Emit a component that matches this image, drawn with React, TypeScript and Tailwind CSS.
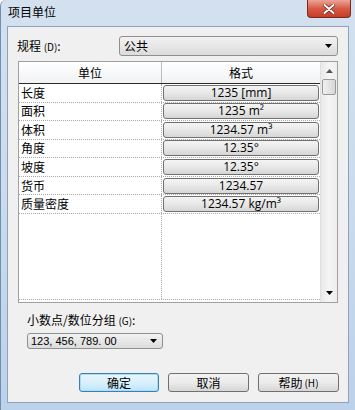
import React from "react";

const rows: [string, string][] = [
  ["长度", "1235 [mm]"],
  ["面积", "1235 m²"],
  ["体积", "1234.57 m³"],
  ["角度", "12.35°"],
  ["坡度", "12.35°"],
  ["货币", "1234.57"],
  ["质量密度", "1234.57 kg/m³"],
];

const font = { fontFamily: '"Noto Sans CJK SC", "Noto Sans", sans-serif' };

function Caret() {
  return (
    <svg width="7" height="4" viewBox="0 0 7 4">
      <path d="M0 0H7L3.5 4Z" fill="#000" />
    </svg>
  );
}

export default function App() {
  return (
    <div
      className="w-[355px] h-[410px] overflow-hidden rounded-tl-[6px] bg-gradient-to-b from-[#d3e1ef] via-[#c9dbed] to-[#bcd2ea] border-l border-[#6f8fb0] text-[12px] text-black flex flex-col"
      style={font}
    >
      {/* title bar */}
      <div className="h-[26px] flex items-start justify-between shrink-0">
        <div className="pl-[7px] pt-[4px] leading-[16px] text-[12px]">项目单位</div>
        <div className="mr-[4px] w-[44px] h-[18px] rounded-b-[4px] border border-t-0 border-[#7a2a1e] bg-gradient-to-b from-[#eba597] via-[#d65a45] to-[#c63b25] flex items-center justify-center">
          <svg width="12" height="10" viewBox="0 0 12 10">
            <path d="M1.5 1L10.5 9M10.5 1L1.5 9" stroke="#5a1a10" strokeWidth="3.2" strokeLinecap="round" />
            <path d="M1.5 1L10.5 9M10.5 1L1.5 9" stroke="#fff" strokeWidth="2" strokeLinecap="round" />
          </svg>
        </div>
      </div>

      {/* client area */}
      <div className="ml-[6px] w-[342px] h-[377px] border border-[#8fa2b8] bg-[#f0f0f0] flex flex-col">
        {/* discipline row */}
        <div className="flex items-center mt-[9px] h-[20px]">
          <div className="pl-[9px] w-[111px] text-[12px] leading-[14px]">
            规程 <span className="text-[10px]">(D)</span>:
          </div>
          <div className="w-[219px] h-[20px] rounded-[3px] border border-[#8e8f8f] bg-gradient-to-b from-[#f2f2f2] to-[#dcdcdc] flex items-center justify-between pl-[4px] pr-[5px]">
            <span className="leading-[14px]">公共</span>
            <Caret />
          </div>
        </div>

        {/* table */}
        <div className="ml-[10px] mt-[5px] w-[320px] h-[242px] border border-[#a0a0a0] bg-white flex">
          <div className="flex-1 flex flex-col">
            {/* header */}
            <div className="h-[22px] flex border-b border-[#2a2a2a] bg-gradient-to-b from-[#ffffff] to-[#f1f2f4] shrink-0">
              <div className="w-[143px] flex items-center justify-center border-r border-[#b6bcc6]">单位</div>
              <div className="flex-1 flex items-center justify-center">格式</div>
            </div>
            {/* body */}
            <div className="flex-1 flex flex-col relative">
              {rows.map(([u, f]) => (
                <div key={u} className="h-[18.57px] flex border-b border-dotted border-[#a8a8a8] shrink-0">
                  <div className="w-[143px] pl-[2px] flex items-center border-r border-dotted border-[#a8a8a8] leading-[14px]">
                    {u}
                  </div>
                  <div className="flex-1 flex items-center pl-[1px] pr-[1px]">
                    <div className="w-full h-[16px] rounded-[3px] border border-[#707070] bg-gradient-to-b from-[#f4f4f4] via-[#e8e8e8] to-[#d6d6d6] flex items-center justify-center leading-[14px]" style={{ fontFamily: '"Open Sans", "Noto Sans", "Noto Sans CJK SC", sans-serif', fontSize: "12px" }}>
                      {f}
                    </div>
                  </div>
                </div>
              ))}
              <div className="flex-1 flex border-b border-dotted border-[#a8a8a8]">
                <div className="w-[143px] border-r border-dotted border-[#a8a8a8]" />
                <div className="flex-1" />
              </div>
              <div className="h-[2px]" />
            </div>
          </div>
          {/* scrollbar */}
          <div className="w-[17px] bg-gradient-to-r from-[#e9e9e9] via-[#f5f5f5] to-[#eeeeee] border-l border-[#e0e0e0] flex flex-col items-center">
            <div className="h-[16px] flex items-center justify-center mt-[1px]">
              <svg width="7" height="4" viewBox="0 0 7 4">
                <path d="M0 4H7L3.5 0Z" fill="#555" />
              </svg>
            </div>
            <div className="w-[14px] h-[16px] rounded-[2px] border border-[#9a9a9a] bg-gradient-to-r from-[#f0f0f0] to-[#d8d8d8]" />
            <div className="flex-1" />
            <div className="h-[16px] flex items-center justify-center mb-[1px]">
              <Caret />
            </div>
          </div>
        </div>

        {/* decimal grouping */}
        <div className="ml-[19px] mt-[9px] leading-[16px]">
          小数点/数位分组 <span className="text-[10px]">(G)</span>:
        </div>
        <div className="ml-[19px] mt-[4px] w-[136px] h-[16px] rounded-[3px] border border-[#8e8f8f] bg-gradient-to-b from-[#f2f2f2] to-[#dcdcdc] flex items-center justify-between pl-[3px] pr-[5px]">
          <span className="leading-[12px]" style={{ fontFamily: '"Liberation Sans", "Noto Sans CJK SC", sans-serif', fontSize: "11px" }}>
            123, 456, 789. 00
          </span>
          <Caret />
        </div>

        {/* buttons */}
        <div className="mt-[24px] flex justify-end gap-[9px] pr-[9px]">
          <div className="w-[80px] h-[19px] rounded-[3px] border border-[#3c7fb1] bg-gradient-to-b from-[#eaf6fd] via-[#d9f0fc] to-[#bee6fd] flex items-center justify-center shadow-[inset_0_0_0_1px_#a9dcf6]">
            确定
          </div>
          <div className="w-[81px] h-[19px] rounded-[3px] border border-[#707070] bg-gradient-to-b from-[#f2f2f2] via-[#ebebeb] to-[#d6d6d6] flex items-center justify-center">
            取消
          </div>
          <div className="w-[81px] h-[19px] rounded-[3px] border border-[#707070] bg-gradient-to-b from-[#f2f2f2] via-[#ebebeb] to-[#d6d6d6] flex items-center justify-center">
            帮助 <span className="text-[10px] ml-[2px]">(H)</span>
          </div>
        </div>
      </div>
    </div>
  );
}
